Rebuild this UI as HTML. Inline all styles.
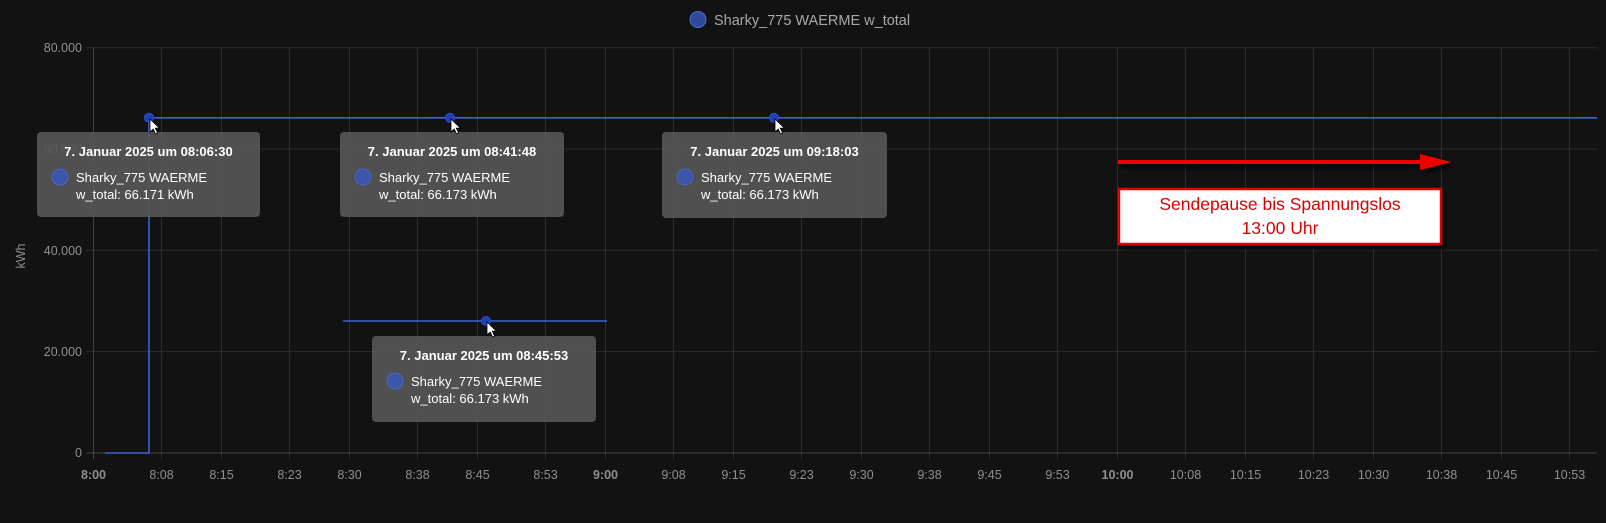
<!DOCTYPE html>
<html><head><meta charset="utf-8"><style>
html,body{margin:0;padding:0;background:#121212;}
svg{display:block;font-family:"Liberation Sans",sans-serif;}
</style></head><body>
<svg width="1606" height="523" viewBox="0 0 1606 523" xmlns="http://www.w3.org/2000/svg">
<defs>
<filter id="sh" x="-10%" y="-30%" width="130%" height="180%"><feDropShadow dx="3" dy="4" stdDeviation="2" flood-color="#000" flood-opacity="0.8"/></filter>
<g id="cur"><path d="M0 0 L0 13 L3.2 10 L5.6 15 L7.6 14 L5.3 9.2 L9.5 9.2 Z" fill="#fff" stroke="#000" stroke-width="0.8"/></g>
</defs>
<rect width="1606" height="523" fill="#121212"/>
<circle cx="698" cy="19.5" r="8" fill="#2f4a9a" stroke="#4f6cc8" stroke-width="1"/>
<text x="714" y="25" font-size="14.5" fill="#a8a8a8">Sharky_775 WAERME w_total</text>
<g stroke="#2e2e2e" stroke-width="1">
<line x1="86" y1="47.7" x2="1597" y2="47.7"/>
<line x1="86" y1="149" x2="1597" y2="149"/>
<line x1="86" y1="250.3" x2="1597" y2="250.3"/>
<line x1="86" y1="351.6" x2="1597" y2="351.6"/>
<line x1="161.5" y1="47.7" x2="161.5" y2="459"/>
<line x1="221.5" y1="47.7" x2="221.5" y2="459"/>
<line x1="289.5" y1="47.7" x2="289.5" y2="459"/>
<line x1="349.5" y1="47.7" x2="349.5" y2="459"/>
<line x1="417.5" y1="47.7" x2="417.5" y2="459"/>
<line x1="477.5" y1="47.7" x2="477.5" y2="459"/>
<line x1="545.5" y1="47.7" x2="545.5" y2="459"/>
<line x1="605.5" y1="47.7" x2="605.5" y2="459"/>
<line x1="673.5" y1="47.7" x2="673.5" y2="459"/>
<line x1="733.5" y1="47.7" x2="733.5" y2="459"/>
<line x1="801.5" y1="47.7" x2="801.5" y2="459"/>
<line x1="861.5" y1="47.7" x2="861.5" y2="459"/>
<line x1="929.5" y1="47.7" x2="929.5" y2="459"/>
<line x1="989.5" y1="47.7" x2="989.5" y2="459"/>
<line x1="1057.5" y1="47.7" x2="1057.5" y2="459"/>
<line x1="1117.5" y1="47.7" x2="1117.5" y2="459"/>
<line x1="1185.5" y1="47.7" x2="1185.5" y2="459"/>
<line x1="1245.5" y1="47.7" x2="1245.5" y2="459"/>
<line x1="1313.5" y1="47.7" x2="1313.5" y2="459"/>
<line x1="1373.5" y1="47.7" x2="1373.5" y2="459"/>
<line x1="1441.5" y1="47.7" x2="1441.5" y2="459"/>
<line x1="1501.5" y1="47.7" x2="1501.5" y2="459"/>
<line x1="1569.5" y1="47.7" x2="1569.5" y2="459"/>
</g>
<line x1="86" y1="453" x2="1597" y2="453" stroke="#444" stroke-width="1"/>
<line x1="93.5" y1="47.7" x2="93.5" y2="459" stroke="#444" stroke-width="1"/>
<g font-size="12.5" fill="#8f8f8f" text-anchor="end">
<text x="82" y="52">80.000</text>
<text x="82" y="153">60.000</text>
<text x="82" y="255">40.000</text>
<text x="82" y="356">20.000</text>
<text x="82" y="457">0</text>
</g>
<text x="25" y="256" font-size="12.5" fill="#8f8f8f" text-anchor="middle" transform="rotate(-90 25 256)">kWh</text>
<g font-size="12.5" fill="#8f8f8f" text-anchor="middle">
<text x="93.5" y="479" font-weight="bold">8:00</text>
<text x="161.5" y="479">8:08</text>
<text x="221.5" y="479">8:15</text>
<text x="289.5" y="479">8:23</text>
<text x="349.5" y="479">8:30</text>
<text x="417.5" y="479">8:38</text>
<text x="477.5" y="479">8:45</text>
<text x="545.5" y="479">8:53</text>
<text x="605.5" y="479" font-weight="bold">9:00</text>
<text x="673.5" y="479">9:08</text>
<text x="733.5" y="479">9:15</text>
<text x="801.5" y="479">9:23</text>
<text x="861.5" y="479">9:30</text>
<text x="929.5" y="479">9:38</text>
<text x="989.5" y="479">9:45</text>
<text x="1057.5" y="479">9:53</text>
<text x="1117.5" y="479" font-weight="bold">10:00</text>
<text x="1185.5" y="479">10:08</text>
<text x="1245.5" y="479">10:15</text>
<text x="1313.5" y="479">10:23</text>
<text x="1373.5" y="479">10:30</text>
<text x="1441.5" y="479">10:38</text>
<text x="1501.5" y="479">10:45</text>
<text x="1569.5" y="479">10:53</text>
</g>
<g stroke="#3d63d0" stroke-width="1.6" fill="none">
<polyline points="105,453 149,453 149,117.8 1597,117.8"/>
<line x1="343" y1="321" x2="607" y2="321"/>
</g>
<g fill="#1f3fb8" stroke="#2a4fd0" stroke-width="1">
<circle cx="149" cy="117.8" r="4.5"/>
<circle cx="450" cy="117.8" r="4.5"/>
<circle cx="774" cy="117.8" r="4.5"/>
<circle cx="486" cy="321" r="4.5"/>
</g>
<g font-size="13" fill="#fff">
<rect x="37" y="132" width="223" height="85" rx="4" fill="#555" fill-opacity="0.93"/>
<text x="148.5" y="156" text-anchor="middle" font-weight="bold">7. Januar 2025 um 08:06:30</text>
<circle cx="60" cy="177" r="8" fill="#3c55a8" stroke="#4a66c0"/>
<text x="76" y="182">Sharky_775 WAERME</text><text x="76" y="199">w_total: 66.171 kWh</text>
<rect x="340" y="132" width="224" height="85" rx="4" fill="#555" fill-opacity="0.93"/>
<text x="452" y="156" text-anchor="middle" font-weight="bold">7. Januar 2025 um 08:41:48</text>
<circle cx="363" cy="177" r="8" fill="#3c55a8" stroke="#4a66c0"/>
<text x="379" y="182">Sharky_775 WAERME</text><text x="379" y="199">w_total: 66.173 kWh</text>
<rect x="662" y="132" width="225" height="86" rx="4" fill="#555" fill-opacity="0.93"/>
<text x="774.5" y="156" text-anchor="middle" font-weight="bold">7. Januar 2025 um 09:18:03</text>
<circle cx="685" cy="177" r="8" fill="#3c55a8" stroke="#4a66c0"/>
<text x="701" y="182">Sharky_775 WAERME</text><text x="701" y="199">w_total: 66.173 kWh</text>
<rect x="372" y="336" width="224" height="86" rx="4" fill="#555" fill-opacity="0.93"/>
<text x="484" y="360" text-anchor="middle" font-weight="bold">7. Januar 2025 um 08:45:53</text>
<circle cx="395" cy="381" r="8" fill="#3c55a8" stroke="#4a66c0"/>
<text x="411" y="386">Sharky_775 WAERME</text><text x="411" y="403">w_total: 66.173 kWh</text>
</g>
<use href="#cur" x="150" y="119"/>
<use href="#cur" x="451" y="119"/>
<use href="#cur" x="775" y="119"/>
<use href="#cur" x="487" y="322"/>
<g filter="url(#sh)">
<path d="M1118 160 L1420 160 L1420 154 L1451 162 L1420 170 L1420 164 L1118 164 Z" fill="#ee0000"/>
</g>
<rect x="1119" y="189" width="322" height="55" fill="#fff" stroke="#e00000" stroke-width="2.5" filter="url(#sh)"/>
<g font-size="17.5" fill="#dd0000" text-anchor="middle">
<text x="1280" y="210">Sendepause bis Spannungslos</text>
<text x="1280" y="234">13:00 Uhr</text>
</g>
</svg>
</body></html>
